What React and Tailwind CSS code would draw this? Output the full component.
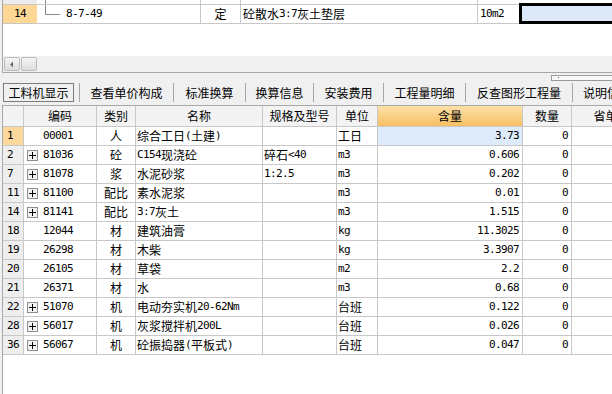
import React from "react";

const MONO = "font-['DejaVu_Sans_Mono',monospace] text-[11px] tracking-[-0.62px]";

function Mixed({ s }) {
  const parts = s.split(/([ -~]+)/);
  return (
    <>
      {parts.map((p, i) =>
        !p ? null : /^[ -~]+$/.test(p) ? (
          <span key={i} className={MONO}>
            {p}
          </span>
        ) : (
          <span key={i}>{p}</span>
        )
      )}
    </>
  );
}

function PlusBox() {
  return (
    <svg width="11" height="11" viewBox="0 0 11 11" className="shrink-0">
      <rect x="0.5" y="0.5" width="10" height="10" fill="#f2f2f2" stroke="#8e8e8e" />
      <rect x="2" y="5" width="7" height="1" fill="#000" />
      <rect x="5" y="2" width="1" height="7" fill="#000" />
    </svg>
  );
}

const rows = [
  ["1", false, "00001", "人", "综合工日(土建)", "", "工日", "3.73", "0"],
  ["2", true, "81036", "砼", "C154现浇砼", "碎石<40", "m3", "0.606", "0"],
  ["7", true, "81078", "浆", "水泥砂浆", "1:2.5", "m3", "0.202", "0"],
  ["11", true, "81100", "配比", "素水泥浆", "", "m3", "0.01", "0"],
  ["14", true, "81141", "配比", "3:7灰土", "", "m3", "1.515", "0"],
  ["18", false, "12044", "材", "建筑油膏", "", "kg", "11.3025", "0"],
  ["19", false, "26298", "材", "木柴", "", "kg", "3.3907", "0"],
  ["20", false, "26105", "材", "草袋", "", "m2", "2.2", "0"],
  ["21", false, "26371", "材", "水", "", "m3", "0.68", "0"],
  ["22", true, "51070", "机", "电动夯实机20-62Nm", "", "台班", "0.122", "0"],
  ["28", true, "56017", "机", "灰浆搅拌机200L", "", "台班", "0.026", "0"],
  ["36", true, "56067", "机", "砼振捣器(平板式)", "", "台班", "0.047", "0"],
];

const tabs = [
  { t: "查看单价构成", c: "w-[93px] justify-center" },
  { t: "标准换算", c: "w-[71px] justify-center" },
  { t: "换算信息", c: "w-[67px] justify-center" },
  { t: "安装费用", c: "w-[69px] justify-center" },
  { t: "工程量明细", c: "w-[81px] justify-center" },
  { t: "反查图形工程量", c: "w-[106px] justify-center" },
  { t: "说明信息", c: "w-[80px] justify-start pl-[10px]" },
];

const CELL = "h-[19px] border-r border-b border-[#c8c8c8] flex items-center leading-[14px] overflow-hidden whitespace-nowrap";
const HCELL = "h-[21px] border-r border-b border-[#c8c8c8] flex items-center justify-center leading-[14px] whitespace-nowrap overflow-hidden";

export default function App() {
  return (
    <div className="w-[612px] h-[394px] overflow-hidden bg-[#f0f0f0] text-black text-[12px] font-['Noto_Sans_CJK_SC',sans-serif]">
      {/* top panel */}
      <div className="ml-[2px] h-[73px] border-l border-b border-[#a8a8a8] bg-white flex flex-col overflow-hidden">
        {/* partial row */}
        <div className="h-[5px] shrink-0 border-b border-[#c8c8c8] flex overflow-hidden">
          <div className="w-[34px] shrink-0 bg-[#ececec]" />
          <div className="w-[164px] shrink-0 border-r border-[#c8c8c8] relative">
            <div className="absolute left-[8px] top-0 w-px h-[5px] bg-[#8a8a8a]" />
          </div>
          <div className="w-[40px] shrink-0 border-r border-[#c8c8c8]" />
          <div className="w-[237px] shrink-0 border-r border-[#c8c8c8]" />
          <div className="flex-1" />
        </div>
        {/* row 14 */}
        <div className="h-[19px] shrink-0 border-b border-[#c8c8c8] flex relative">
          <div className="w-[34px] shrink-0 bg-[#fcd796] flex items-center justify-center">
            <span className={MONO}>14</span>
          </div>
          <div className="w-[164px] shrink-0 border-r border-[#c8c8c8] relative flex items-center">
            <div className="absolute left-[8px] top-0 w-px h-[10px] bg-[#8a8a8a]" />
            <div className="absolute left-[8px] top-[9px] w-[15px] h-px bg-[#8a8a8a]" />
            <span className={MONO + " ml-[29px]"}>8-7-49</span>
          </div>
          <div className="w-[40px] shrink-0 border-r border-[#c8c8c8] flex items-center justify-center">定</div>
          <div className="w-[237px] shrink-0 border-r border-[#c8c8c8] flex items-center pl-[2px] whitespace-nowrap">
            <Mixed s="砼散水3:7灰土垫层" />
          </div>
          <div className="w-[40px] shrink-0 flex items-center pl-[2px]">
            <span className={MONO}>10m2</span>
          </div>
          <div className="absolute left-[516px] top-[-2px] w-[100px] h-[21px] border-[3px] border-black bg-[#dde9f8]" />
        </div>
        <div className="flex-1" />
        {/* scrollbar */}
        <div className="h-[16px] shrink-0 bg-[#f0f0f0] flex items-center pl-px gap-px">
          <div className="w-[16px] h-[14px] rounded-[2px] border border-[#bdbdbd] bg-linear-to-b from-[#f6f6f6] to-[#dedede] flex items-center justify-center">
            <svg width="6" height="7" viewBox="0 0 6 7">
              <path d="M4 0.5 L1 3.5 L4 6.5 Z" fill="#6a6a6a" />
            </svg>
          </div>
          <div className="w-[16px] h-[14px] rounded-[2px] border border-[#bdbdbd] bg-linear-to-b from-[#f4f4f4] to-[#dcdcdc]" />
        </div>
      </div>

      {/* tab bar */}
      <div className="h-[32px] relative flex items-start pt-[10px] overflow-hidden">
        <div className="absolute left-[551px] top-[2px] w-[70px] h-[6px] border border-[#9a9a9a] bg-[#f8f8f8]">
          <div className="absolute left-[6px] top-[1px] w-px h-px bg-[#555]" />
        </div>
        <div className="w-[3px] shrink-0" />
        <div className="w-[71px] shrink-0 h-[19px] border border-[#7c7c7c] flex items-center justify-center leading-[14px] whitespace-nowrap">
          工料机显示
        </div>
        <div className="w-[5px] shrink-0" />
        <div className="w-px shrink-0 h-[19px] bg-[#a6a6a6]" />
        {tabs.map((tb, i) => (
          <React.Fragment key={i}>
            <div className={tb.c + " shrink-0 h-[19px] flex items-center leading-[14px] whitespace-nowrap"}>
              {tb.t}
            </div>
            {i < 6 && <div className="w-px shrink-0 h-[19px] bg-[#a6a6a6]" />}
          </React.Fragment>
        ))}
      </div>

      {/* bottom grid */}
      <div className="ml-[2px] h-[289px] border-l border-t border-[#a8a8a8] bg-white overflow-hidden">
        <div className="grid grid-cols-[21px_73px_39px_127px_74px_41px_145px_49px_80px] w-[649px]">
          <div className={HCELL + " bg-[#f3f3f3]"} />
          <div className={HCELL + " bg-[#f3f3f3]"}>编码</div>
          <div className={HCELL + " bg-[#f3f3f3]"}>类别</div>
          <div className={HCELL + " bg-[#f3f3f3]"}>名称</div>
          <div className={HCELL + " bg-[#f3f3f3]"}>规格及型号</div>
          <div className={HCELL + " bg-[#f3f3f3]"}>单位</div>
          <div className={HCELL + " bg-linear-to-b from-[#fde1a8] to-[#f7c062]"}>含量</div>
          <div className={HCELL + " bg-[#f3f3f3]"}>数量</div>
          <div className={HCELL + " bg-[#f3f3f3]"}>省单价</div>

          {rows.map((r, i) => (
            <React.Fragment key={i}>
              <div className={CELL + " pl-[4px] " + (i === 0 ? "bg-[#fcd89c]" : "bg-[#eeeeee]")}>
                <span className={MONO}>{r[0]}</span>
              </div>
              <div className={CELL + (r[1] ? " pl-[3px]" : " pl-[19px]")}>
                {r[1] && <PlusBox />}
                <span className={MONO + (r[1] ? " ml-[5px]" : "")}>{r[2]}</span>
              </div>
              <div className={CELL + " justify-center"}>{r[3]}</div>
              <div className={CELL + " pl-[1px]"}>
                <Mixed s={r[4]} />
              </div>
              <div className={CELL + " pl-[1px]"}>
                <Mixed s={r[5]} />
              </div>
              <div className={CELL + " pl-[1px]"}>
                <Mixed s={r[6]} />
              </div>
              <div className={CELL + " justify-end pr-[3px] " + (i === 0 ? "bg-[#ddebfb]" : "")}>
                <span className={MONO}>{r[7]}</span>
              </div>
              <div className={CELL + " justify-end pr-[3px]"}>
                <span className={MONO}>{r[8]}</span>
              </div>
              <div className={CELL} />
            </React.Fragment>
          ))}
        </div>
      </div>
    </div>
  );
}
